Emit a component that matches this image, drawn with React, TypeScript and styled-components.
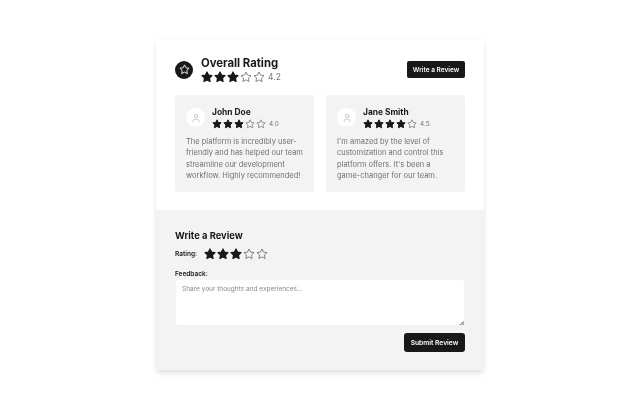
import React from 'react'
import styled, { createGlobalStyle } from 'styled-components'
import { User } from 'lucide-react'

const GlobalStyle = createGlobalStyle`
  html, body {
    margin: 0;
    height: 100%;
    background: #ffffff;
    font-family: Inter, "Liberation Sans", sans-serif;
  }
  #root {
    height: 100%;
  }
`

const Page = styled.div`
  display: flex;
  justify-content: center;
  padding-top: 40px;
  will-change: opacity;
`

const Card = styled.div`
  width: 328px;
  background: #ffffff;
  border-radius: 2px;
  overflow: hidden;
  box-shadow: 0 4px 6px -1px rgba(0, 0, 0, 0.13), 0 0 4px rgba(0, 0, 0, 0.04);
`

const Top = styled.section`
  padding: 16px 19px 18px;
`

const Header = styled.div`
  display: flex;
  align-items: center;
  justify-content: space-between;
`

const Summary = styled.div`
  display: flex;
  align-items: center;
  gap: 8px;
`

const Badge = styled.div`
  width: 18px;
  height: 18px;
  border-radius: 50%;
  background: #18181b;
  color: #ffffff;
  display: flex;
  align-items: center;
  justify-content: center;
`

const Title = styled.h2`
  margin: 0;
  font-size: 11.3px;
  line-height: 15px;
  font-weight: 700;
  color: #18181b;
`

const StarRow = styled.div<{ $gap?: number }>`
  display: flex;
  align-items: center;
  gap: ${p => p.$gap ?? 0}px;
  color: #18181b;
`

const Score = styled.span<{ $size: number }>`
  font-size: ${p => p.$size}px;
  color: #757575;
  margin-left: 3px;
`

const SmallButton = styled.button`
  border: 0;
  border-radius: 2px;
  background: #18181b;
  color: #fafafa;
  font-family: inherit;
  font-size: 6.5px;
  font-weight: 600;
  width: 58px;
  height: 17px;
  padding: 0;
  filter: grayscale(1);
`

const Reviews = styled.div`
  display: grid;
  grid-template-columns: 139px 139px;
  gap: 12px;
  margin-top: 12px;
`

const ReviewCard = styled.article`
  background: #f3f3f4;
  border-radius: 3px;
  padding: 11px;
  height: 97px;
  box-sizing: border-box;
`

const ReviewHead = styled.div`
  display: flex;
  align-items: center;
  gap: 7px;
`

const Avatar = styled.div`
  width: 19px;
  height: 19px;
  border-radius: 50%;
  background: #ffffff;
  color: #a1a1a1;
  display: flex;
  align-items: center;
  justify-content: center;
`

const Name = styled.div`
  font-size: 8.4px;
  line-height: 13px;
  font-weight: 700;
  color: #18181b;
`

const Body = styled.p`
  margin: 7px 0 0;
  font-size: 7.5px;
  line-height: 11.3px;
  color: #707070;
`

const Form = styled.section`
  background: #f3f3f4;
  padding: 20px 19px 18px;
`

const FormTitle = styled.h3`
  margin: 0;
  font-size: 9.4px;
  line-height: 12px;
  font-weight: 700;
  color: #18181b;
`

const RatingLine = styled.div`
  display: flex;
  align-items: center;
  gap: 7px;
  margin-top: 6px;
`

const Label = styled.label`
  display: block;
  font-size: 6.5px;
  line-height: 10px;
  font-weight: 600;
  color: #18181b;
`

const Feedback = styled.div`
  margin-top: 9px;
`

const TextArea = styled.textarea`
  display: block;
  box-sizing: border-box;
  width: 288px;
  height: 45px;
  margin: 1px 0 0 1px;
  padding: 4px 6px;
  border: 0;
  border-radius: 2px;
  outline: none;
  background: #ffffff;
  font-family: inherit;
  font-size: 6.5px;
  line-height: 10px;
  color: #18181b;

  &::placeholder {
    color: #8a8a8a;
    opacity: 1;
  }

  &::-webkit-resizer {
    background: linear-gradient(135deg, transparent 50%, #b0b0b0 50%) no-repeat right bottom / 5px 5px;
  }
`

const Actions = styled.div`
  display: flex;
  justify-content: flex-end;
  margin-top: 8px;
`

const SubmitButton = styled(SmallButton)`
  width: 61px;
  height: 19px;
  border-radius: 3px;
  font-size: 6.7px;
`

const StarIcon: React.FC<{ size: number; solid: boolean; weight: number }> = ({ size, solid, weight }) => (
  <svg
    width={size}
    height={size}
    viewBox="0 0 24 24"
    fill={solid ? 'currentColor' : 'none'}
    stroke="currentColor"
    strokeWidth={weight}
    strokeLinejoin="round"
  >
    <polygon points="12 2 15.09 8.26 22 9.27 17 14.14 18.18 21.02 12 17.77 5.82 21.02 7 14.14 2 9.27 8.91 8.26" />
  </svg>
)

const Stars: React.FC<{ filled: number; size: number }> = ({ filled, size }) => (
  <StarRow $gap={1}>
    {[0, 1, 2, 3, 4].map(i => (
      <StarIcon key={i} size={size} solid={i < filled} weight={i < filled ? 2.4 : 1} />
    ))}
  </StarRow>
)

type Review = { name: string; filled: number; score: string; text: string }

const reviews: Review[] = [
  {
    name: 'John Doe',
    filled: 3,
    score: '4.0',
    text: 'The platform is incredibly user-friendly and has helped our team streamline our development workflow. Highly recommended!'
  },
  {
    name: 'Jane Smith',
    filled: 4,
    score: '4.5',
    text: "I'm amazed by the level of customization and control this platform offers. It's been a game-changer for our team."
  }
]

const App: React.FC = () => {
  return (
    <Page>
      <GlobalStyle />
      <Card>
        <Top>
          <Header>
            <Summary>
              <Badge>
                <StarIcon size={11} solid={false} weight={2} />
              </Badge>
              <div>
                <Title>Overall Rating</Title>
                <StarRow>
                  <Stars filled={3} size={12} />
                  <Score $size={8.5}>4.2</Score>
                </StarRow>
              </div>
            </Summary>
            <SmallButton>Write a Review</SmallButton>
          </Header>
          <Reviews>
            {reviews.map(r => (
              <ReviewCard key={r.name}>
                <ReviewHead>
                  <Avatar>
                    <User size={10} strokeWidth={1.25} />
                  </Avatar>
                  <div>
                    <Name>{r.name}</Name>
                    <StarRow>
                      <Stars filled={r.filled} size={10} />
                      <Score $size={6.5}>{r.score}</Score>
                    </StarRow>
                  </div>
                </ReviewHead>
                <Body>{r.text}</Body>
              </ReviewCard>
            ))}
          </Reviews>
        </Top>
        <Form>
          <FormTitle>Write a Review</FormTitle>
          <RatingLine>
            <Label>Rating:</Label>
            <Stars filled={3} size={12} />
          </RatingLine>
          <Feedback>
            <Label>Feedback:</Label>
            <TextArea placeholder="Share your thoughts and experiences..." />
          </Feedback>
          <Actions>
            <SubmitButton>Submit Review</SubmitButton>
          </Actions>
        </Form>
      </Card>
    </Page>
  )
}

export default App
